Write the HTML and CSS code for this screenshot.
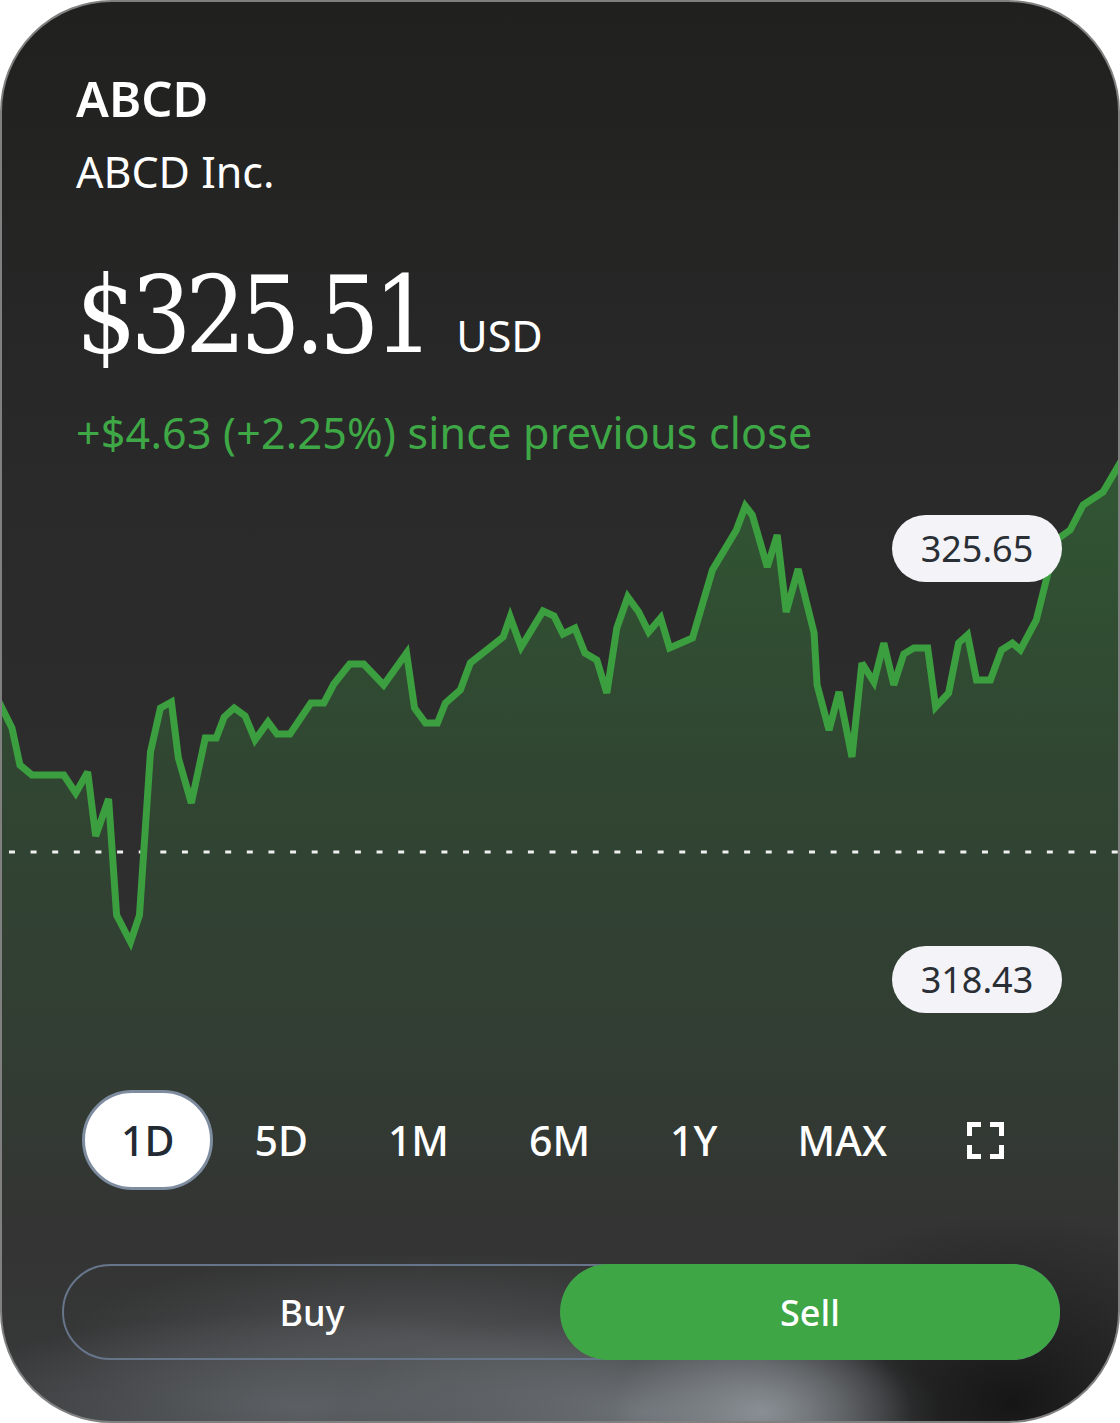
FILE: index.html
```html
<!DOCTYPE html>
<html lang="en">
<head>
<meta charset="utf-8">
<title>ABCD Inc. stock</title>
<link rel="stylesheet" href="styles.css">
</head>
<body>
<div class="card">
  <header class="header">
    <div class="ticker">ABCD</div>
    <div class="company">ABCD Inc.</div>
    <div class="price-row">
      <span class="price">$325.51</span>
      <span class="currency">USD</span>
    </div>
    <div class="change">+$4.63 (+2.25%) since previous close</div>
  </header>

  <div class="plot">
    <svg class="plot-svg" viewBox="0 0 1120 600" preserveAspectRatio="none" xmlns="http://www.w3.org/2000/svg">
      <defs>
        <linearGradient id="fillGrad" x1="0" y1="0" x2="0" y2="600" gradientUnits="userSpaceOnUse">
          <stop offset="0" stop-color="#3ea645" stop-opacity="0.36"/>
          <stop offset="0.5" stop-color="#3ea645" stop-opacity="0.21"/>
          <stop offset="1" stop-color="#3ea645" stop-opacity="0.1"/>
        </linearGradient>
      </defs>
      <polygon fill="url(#fillGrad)" points="0,247 10,268 18,305 30,315 62,315 74,333 86,312 94,376 107,339 115,455 129,482 138,455 149,292 159,248 170,242 177,298 190,343 204,278 215,278 223,257 233,248 244,256 254,280 267,262 276,274 289,274 310,243 323,243 333,224 349,204 363,204 383,225 406,193 414,248 425,263 437,263 445,243 460,230 470,203 503,177 510,157 521,187 543,151 554,156 563,174 575,168 585,193 597,200 607,233 617,168 628,137 639,152 649,172 661,158 670,188 693,178 713,110 737,70 746,46 753,55 768,107 778,75 787,152 799,109 815,173 818,225 830,270 840,232 853,297 863,203 875,222 885,183 895,225 905,194 915,188 929,188 937,247 950,233 960,183 969,175 978,220 992,220 1003,190 1014,183 1022,190 1038,160 1050,112 1058,80 1072,70 1085,45 1105,32 1125,0 1125,600 0,600"/>
      <line x1="7" y1="392" x2="1120" y2="392" stroke="#ffffff" stroke-opacity="0.92" stroke-width="3" stroke-dasharray="6 15.7"/>
      <polyline fill="none" stroke="#3b9f3f" stroke-width="7" stroke-linejoin="miter" stroke-miterlimit="3" points="-4,240 10,268 18,305 30,315 62,315 74,333 86,312 94,376 107,339 115,455 129,482 138,455 149,292 159,248 170,242 177,298 190,343 204,278 215,278 223,257 233,248 244,256 254,280 267,262 276,274 289,274 310,243 323,243 333,224 349,204 363,204 383,225 406,193 414,248 425,263 437,263 445,243 460,230 470,203 503,177 510,157 521,187 543,151 554,156 563,174 575,168 585,193 597,200 607,233 617,168 628,137 639,152 649,172 661,158 670,188 693,178 713,110 737,70 746,46 753,55 768,107 778,75 787,152 799,109 815,173 818,225 830,270 840,232 853,297 863,203 875,222 885,183 895,225 905,194 915,188 929,188 937,247 950,233 960,183 969,175 978,220 992,220 1003,190 1014,183 1022,190 1038,160 1050,112 1058,80 1072,70 1085,45 1105,32 1125,-2"/>
    </svg>
    <div class="tag tag-high">325.65</div>
    <div class="tag tag-low">318.43</div>
  </div>

  <nav class="ranges">
    <button class="range is-active">1D</button>
    <button class="range">5D</button>
    <button class="range">1M</button>
    <button class="range">6M</button>
    <button class="range">1Y</button>
    <button class="range">MAX</button>
    <button class="range range-icon" aria-label="Fullscreen">
      <svg class="fs-icon" viewBox="0 0 37 37" xmlns="http://www.w3.org/2000/svg">
        <path d="M2.5 14V2.5H14 M23 2.5H34.5V14 M34.5 23V34.5H23 M14 34.5H2.5V23" fill="none" stroke="#ffffff" stroke-width="5" stroke-linejoin="miter"/>
      </svg>
    </button>
  </nav>

  <div class="trade">
    <button class="trade-btn buy">Buy</button>
    <button class="trade-btn sell">Sell</button>
  </div>
</div>
</body>
</html>
```

FILE: styles.css
```css
html, body {
  margin: 0;
  padding: 0;
  background: #ffffff;
}

.card {
  box-sizing: border-box;
  width: 1120px;
  height: 1423px;
  border: 2px solid #808080;
  border-radius: 112px;
  overflow: hidden;
  font-family: "Noto Sans", "Open Sans", sans-serif;
  color: #ffffff;
  background:
    radial-gradient(ellipse 150px 90px at 760px 1410px, rgba(150, 156, 162, 0.8), rgba(150, 156, 162, 0) 100%),
    radial-gradient(ellipse 300px 100px at 640px 1410px, rgba(120, 126, 132, 0.8), rgba(120, 126, 132, 0) 100%),
    radial-gradient(ellipse 380px 95px at 300px 1405px, rgba(100, 105, 110, 0.8), rgba(100, 105, 110, 0) 100%),
    radial-gradient(ellipse 260px 190px at 1010px 1400px, rgba(22, 22, 22, 1), rgba(22, 22, 22, 0) 100%),
    radial-gradient(ellipse 360px 90px at 420px 1340px, rgba(100, 103, 105, 0.55), rgba(100, 103, 105, 0) 100%),
    linear-gradient(180deg, #20201f 0%, #292929 30%, #2d2d2d 55%, #333333 85%, #38393a 100%);
}

.header {
  padding: 66px 76px 0 74px;
}

.ticker {
  font-size: 49px;
  font-weight: 600;
  line-height: 60px;
}

.company {
  margin-top: 16px;
  font-size: 43px;
  line-height: 56px;
}

.price-row {
  margin-top: 63px;
  display: flex;
  align-items: baseline;
  gap: 28px;
}

.price {
  font-family: "DejaVu Serif", "Liberation Serif", serif;
  font-stretch: condensed;
  font-size: 106px;
  line-height: 106px;
  letter-spacing: -6px;
}

.currency {
  font-size: 43px;
  line-height: 43px;
}

.change {
  margin-top: 36px;
  font-size: 43px;
  line-height: 56px;
  letter-spacing: 0.2px;
  color: #3fa846;
}

.plot {
  position: relative;
  margin-top: -1px;
  height: 600px;
}

.plot-svg {
  display: block;
  width: 100%;
  height: 600px;
}

.tag {
  position: absolute;
  right: 56px;
  width: 170px;
  height: 67px;
  border-radius: 34px;
  background: #f3f3f8;
  color: #2a2f35;
  font-size: 36px;
  display: flex;
  align-items: center;
  justify-content: center;
}

.tag-high { top: 55px; }
.tag-low { top: 486px; }

.ranges {
  display: flex;
  align-items: center;
  gap: 2px;
  padding: 30px 0 50px 80px;
  background: linear-gradient(180deg, rgba(62, 166, 69, 0.1), rgba(62, 166, 69, 0));
}

.range {
  box-sizing: border-box;
  height: 100px;
  padding: 0 36px;
  border: 3px solid transparent;
  border-radius: 50px;
  background: transparent;
  color: #ffffff;
  font-family: "Noto Sans", "Open Sans", sans-serif;
  font-size: 41px;
  font-weight: 500;
  display: flex;
  align-items: center;
  justify-content: center;
}

.range.is-active {
  background: #ffffff;
  border-color: #7e8ca0;
  color: #222a33;
}

.fs-icon {
  display: block;
  width: 37px;
  height: 37px;
}

.trade {
  margin: 24px 58px 0 60px;
  height: 96px;
  box-sizing: border-box;
  border: 2px solid #67758a;
  border-radius: 48px;
  display: grid;
  grid-template-columns: 1fr 498px;
}

.trade-btn {
  border: none;
  background: transparent;
  color: #ffffff;
  font-family: "Noto Sans", "Open Sans", sans-serif;
  font-size: 36px;
  font-weight: 500;
  display: flex;
  align-items: center;
  justify-content: center;
  padding: 0;
}

.sell {
  margin: -2px -2px -2px 0;
  background: #3ea645;
  border-radius: 50px;
}
```
